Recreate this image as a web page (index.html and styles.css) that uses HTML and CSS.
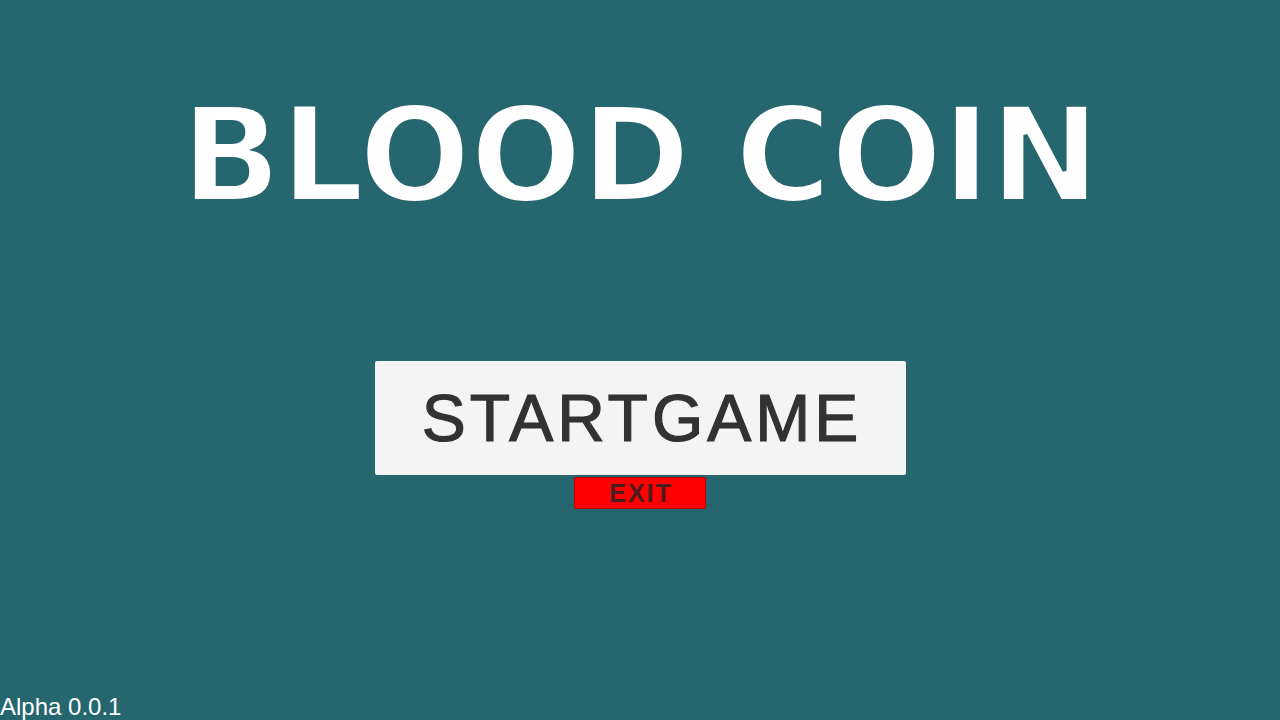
FILE: index.html
```html
<!DOCTYPE html>
<html lang="en">
<head>
    <meta charset="UTF-8">
    <meta name="viewport" content="width=device-width, initial-scale=1.0">
    <title>Blood Coin</title>
    <link rel="stylesheet" href="styles.css">
</head>
<body>
    <main class="menu">
        <h1 class="title">BLOOD COIN</h1>
        <div class="buttons">
            <button class="start">STARTGAME</button>
            <button class="exit">EXIT</button>
        </div>
        <span class="version">Alpha 0.0.1</span>
    </main>
</body>
</html>
```

FILE: styles.css
```css
*,
*::before,
*::after{
    padding: 0;
    margin: 0;
    box-sizing: border-box;
}

:root{
    --bg: #26666f;
}

body{
    background: var(--bg);
    font-family: "Liberation Sans", Arial, sans-serif;
    overflow: hidden;
}

.menu{
    display: flex;
    flex-direction: column;
    align-items: center;
    height: 100vh;
}

/* bold face, eaten back a little by a stroke in the background colour */
.title{
    margin-top: 89px;
    font: bold 132px/132px "DejaVu Sans", sans-serif;
    -webkit-text-stroke: 4px var(--bg);
    letter-spacing: -1px;
    color: #fff;
}

.buttons{
    display: flex;
    flex-direction: column;
    align-items: center;
    gap: 2px;
    margin-top: 140px;
}

.start{
    width: 531px;
    height: 114px;
    border: none;
    border-radius: 2px;
    background: #f4f4f4;
    color: #323232;
    font: 66px "Liberation Sans", Arial, sans-serif;
    -webkit-text-stroke: 1.2px #323232;
    letter-spacing: 4px;
    padding-left: 4px;
}

.exit{
    width: 132px;
    height: 32px;
    border: 1px solid #b40000;
    border-radius: 2px;
    background: #ff0000;
    color: #4a1e1e;
    font: bold 25px/1 "Liberation Sans", Arial, sans-serif;
    letter-spacing: 2px;
    padding-left: 2px;
}

.version{
    align-self: flex-start;
    margin-top: auto;
    color: #fff;
    font-size: 24px;
    line-height: 28px;
    margin-bottom: -1px;
}
```
